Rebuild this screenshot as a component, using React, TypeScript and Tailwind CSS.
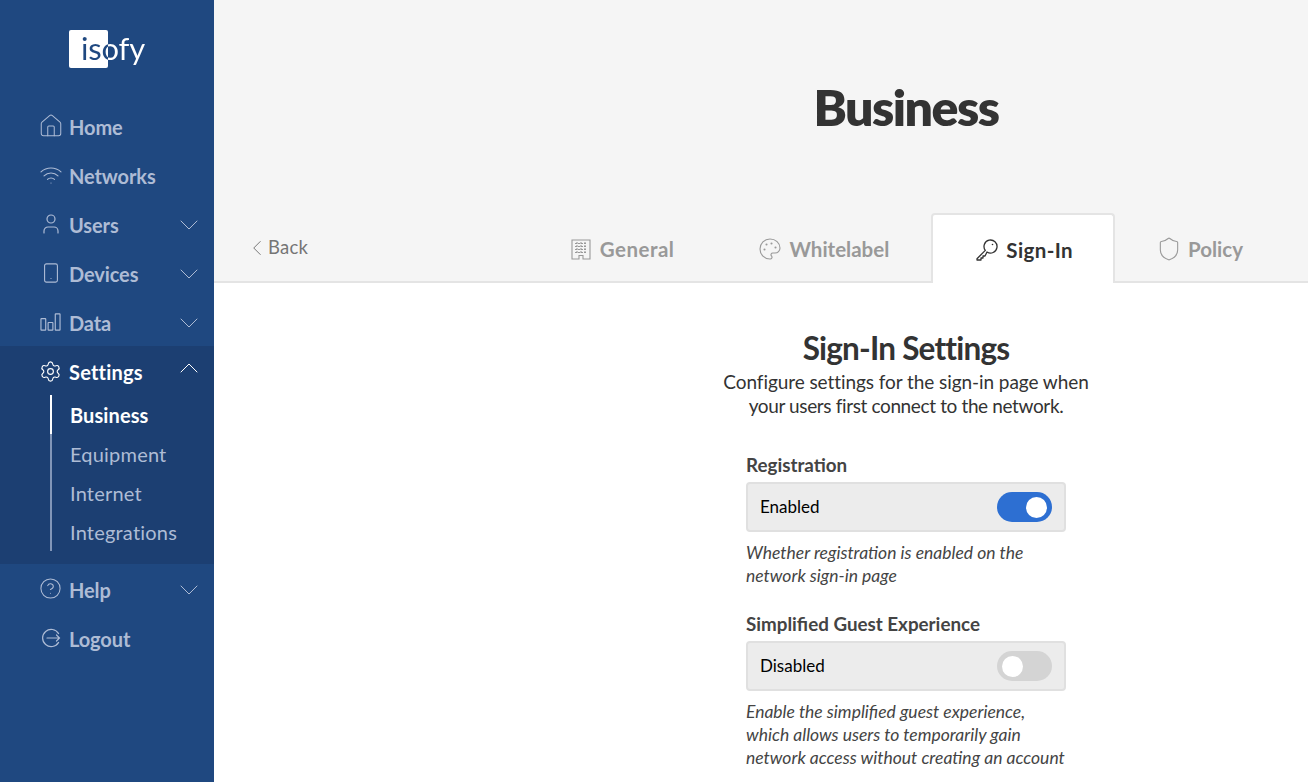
import { ChevronDown, ChevronUp, ChevronLeft, CircleHelp, House, Palette, Settings, Shield, Smartphone, User, Wifi } from "lucide-react";
import type { ReactNode } from "react";

function DataIcon() {
  return (
    <svg width="22" height="20" viewBox="0 0 22 20" fill="none" stroke="currentColor" strokeWidth="1.2">
      <rect x="1" y="6.5" width="5" height="12" rx="0.5" />
      <rect x="8.5" y="10.5" width="5" height="8" rx="0.5" />
      <rect x="16" y="1.5" width="5" height="17" rx="0.5" />
    </svg>
  );
}

function LogoutIcon() {
  return (
    <svg width="20" height="20" viewBox="0 0 20 20" fill="none" stroke="currentColor" strokeWidth="1.2" strokeLinecap="round">
      <path d="M17.6 5.6A8.6 8.6 0 1 0 17.6 14.4" />
      <path d="M6 10H18.5M15.5 7L18.5 10L15.5 13" />
    </svg>
  );
}

function BuildingIcon() {
  return (
    <svg width="20" height="21" viewBox="0 0 20 21" fill="none" stroke="currentColor" strokeWidth="1.1" className="shrink-0">
      <path d="M1 1H19V20H12V16.5H8V20H1Z" />
      <path d="M4 4.5H16M4 7.5H16M4 10.5H16M4 13.5H16M6 3V15M10 3V15M14 3V15" strokeDasharray="2 1" />
    </svg>
  );
}

function KeyIcon() {
  return (
    <svg width="22" height="22" viewBox="0 0 22 22" fill="none" stroke="currentColor" strokeWidth="1.3" strokeLinejoin="round" className="shrink-0">
      <path d="M9.3 11.4L1 19.7V21H5V19H7V17H9L11 13A6.5 6.5 0 1 0 9.3 11.4Z" />
      <circle cx="16.5" cy="5.5" r="0.8" fill="currentColor" stroke="none" />
    </svg>
  );
}

type NavItem = { label: string; icon: ReactNode; chevron?: boolean };

const topNav: NavItem[] = [
  { label: "Home", icon: <House size={26} strokeWidth={0.95} className="shrink-0" /> },
  { label: "Networks", icon: <Wifi size={24} strokeWidth={1.1} className="shrink-0" /> },
  { label: "Users", icon: <User size={24} strokeWidth={1.2} className="shrink-0" />, chevron: true },
  { label: "Devices", icon: <Smartphone size={22} strokeWidth={1.2} className="shrink-0" />, chevron: true },
  { label: "Data", icon: <DataIcon />, chevron: true },
];

const bottomNav: NavItem[] = [
  { label: "Help", icon: <CircleHelp size={23} strokeWidth={1.1} className="shrink-0" />, chevron: true },
  { label: "Logout", icon: <LogoutIcon /> },
];

const subNav = ["Business", "Equipment", "Internet", "Integrations"];

function NavRow({ item }: { item: NavItem }) {
  return (
    <div className="flex h-[49px] items-center pl-[40px] pr-[9px] text-[#aebcd5]">
      <span className="flex w-[21px] justify-center -translate-y-px">{item.icon}</span>
      <span className="ml-[8px] flex-1 text-[20px] font-bold tracking-[-0.1px]">{item.label}</span>
      {item.chevron && <ChevronDown size={32} strokeWidth={0.75} className="shrink-0" />}
    </div>
  );
}

function Sidebar() {
  return (
    <aside className="flex h-[782px] w-[214px] shrink-0 flex-col bg-[#1f4880]">
      <div className="relative mt-[30px] ml-[69px] h-[38px] w-[39px] rounded-[2px] bg-white">
        <span className="absolute top-[-6px] left-[12px] bg-[linear-gradient(90deg,#1f4880_0,#1f4880_27px,#ffffff_27px)] bg-clip-text text-[31px] leading-[48px] font-normal tracking-[-0.2px] text-transparent">
          isofy
        </span>
      </div>
      <nav className="mt-[34px] flex flex-col">
        {topNav.map((item) => (
          <NavRow key={item.label} item={item} />
        ))}
        <div className="-mt-px mb-px h-[218px] bg-[#1c3f72] pt-px">
          <div className="flex h-[48px] items-center pt-[2px] pl-[40px] pr-[9px] text-white">
            <span className="flex w-[21px] justify-center -translate-y-px">
              <Settings size={23} strokeWidth={1.2} className="shrink-0" />
            </span>
            <span className="ml-[8px] flex-1 text-[20px] font-bold tracking-[0.2px]">Settings</span>
            <ChevronUp size={32} strokeWidth={0.75} className="shrink-0 -translate-y-1" />
          </div>
          <div className="ml-[50px] flex w-[140px] flex-col border-l-2 border-[#8296b8]">
            {subNav.map((label, i) => (
              <div
                key={label}
                className={
                  i === 0
                    ? "-ml-[2px] flex h-[39px] items-center border-l-2 border-white pt-[1px] pl-[18px] text-[20px] font-bold tracking-[0.1px] text-white"
                    : "flex h-[39px] items-center pt-[1px] pl-[18px] text-[20px] tracking-[0.2px] text-[#aebcd5]"
                }
              >
                {label}
              </div>
            ))}
          </div>
        </div>
        {bottomNav.map((item) => (
          <NavRow key={item.label} item={item} />
        ))}
      </nav>
    </aside>
  );
}

const tabs = [
  {
    label: "General",
    icon: <BuildingIcon />,
    className: "flex h-[70px] items-center gap-[9px] px-[43px] pt-[2px] text-[20.5px] font-bold tracking-[0.5px] text-[#999999]",
  },
  {
    label: "Whitelabel",
    icon: <Palette size={24} strokeWidth={1.1} className="-mx-[2px] shrink-0" />,
    className: "flex h-[70px] items-center gap-[9px] pr-[42px] pl-[43px] pt-[2px] text-[20.5px] font-bold text-[#999999]",
  },
  {
    label: "Sign-In",
    icon: <KeyIcon />,
    className:
      "mr-[2px] flex h-[70px] items-center gap-[8px] rounded-t-[4px] border-2 border-b-0 border-[#e4e4e4] bg-white pr-[40px] pl-[43px] pt-[2px] text-[20.5px] font-bold tracking-[0.4px] text-[#333333]",
  },
  {
    label: "Policy",
    icon: <Shield size={26} strokeWidth={1} className="-mx-[4px] shrink-0" />,
    className: "flex h-[70px] items-center gap-[10px] px-[43px] pt-[2px] text-[20.5px] font-bold text-[#999999]",
  },
];

function Toggle({ on }: { on: boolean }) {
  return (
    <span
      className={
        on
          ? "flex h-[30px] w-[55px] items-center justify-end rounded-full bg-[#2d6fd2] px-[5px]"
          : "flex h-[30px] w-[55px] items-center justify-start rounded-full bg-[#d4d4d4] px-[5px]"
      }
    >
      <span className="h-[21px] w-[21px] rounded-full bg-white" />
    </span>
  );
}

function Field({ label, value, on, help }: { label: string; value: string; on: boolean; help: string[] }) {
  return (
    <div className="w-[320px]">
      <div className="h-[27px] text-[18.8px] leading-[27px] font-bold text-[#444444]">{label}</div>
      <div className="mt-[4px] flex h-[50px] items-center justify-between rounded-[4px] border-2 border-[#e0e0e0] bg-[#ececec] pr-[12px] pl-[12px]">
        <span className="text-[17px] text-black">{value}</span>
        <Toggle on={on} />
      </div>
      <p className="mt-[9px] text-[17.5px] leading-[23px] text-[#444444] italic">
        {help.map((line) => (
          <span key={line} className="block whitespace-nowrap">
            {line}
          </span>
        ))}
      </p>
    </div>
  );
}

export default function App() {
  return (
    <div className="flex h-[782px] w-[1308px] overflow-hidden bg-white font-['Lato',sans-serif]">
      <Sidebar />
      <main className="flex-1">
        <header className="relative h-[283px] border-b-2 border-[#e4e4e4] bg-[#f5f5f5]">
          <h1 className="ml-[290px] pt-[74px] text-center text-[50px] leading-[66px] font-extrabold tracking-[-1.5px] text-[#333333]">
            Business
          </h1>
          <div className="absolute inset-x-0 bottom-[-2px] flex h-[72px] items-end justify-between pr-[22px] pl-[35px]">
            <div className="mb-[21px] flex items-center text-[18.5px] text-[#757575]">
              <ChevronLeft size={26} strokeWidth={0.9} className="-mx-[5px] shrink-0" />
              <span className="ml-[3px] tracking-[0.2px]">Back</span>
            </div>
            <div className="flex">
              {tabs.map((tab) => (
                <div key={tab.label} className={tab.className}>
                  {tab.icon}
                  {tab.label}
                </div>
              ))}
            </div>
          </div>
        </header>
        <section className="ml-[290px] flex flex-col items-center">
          <h2 className="mt-[45px] text-[31.5px] leading-[40px] font-bold tracking-[-0.8px] text-[#333333]">Sign-In Settings</h2>
          <p className="mt-[2px] text-center text-[19px] leading-[24px] text-[#333333]">
            <span className="block tracking-[-0.07px]">Configure settings for the sign-in page when</span>
            <span className="block tracking-[-0.37px]">your users first connect to the network.</span>
          </p>
          <div className="mt-[33px] flex flex-col gap-[23px]">
            <Field
              label="Registration"
              value="Enabled"
              on
              help={["Whether registration is enabled on the", "network sign-in page"]}
            />
            <Field
              label="Simplified Guest Experience"
              value="Disabled"
              on={false}
              help={[
                "Enable the simplified guest experience,",
                "which allows users to temporarily gain",
                "network access without creating an account",
              ]}
            />
          </div>
        </section>
      </main>
    </div>
  );
}
